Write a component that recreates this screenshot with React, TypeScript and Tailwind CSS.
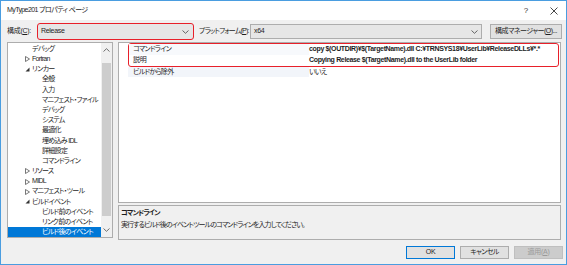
import React from 'react';

const font = { fontFamily: '"Liberation Sans", "Noto Sans CJK JP", sans-serif', fontFeatureSettings: '"palt"' };

type Node = { label: string; level: number; arrow?: 'closed' | 'open'; selected?: boolean };

const tree: Node[] = [
  { label: 'デバッグ', level: 1 },
  { label: 'Fortran', level: 1, arrow: 'closed' },
  { label: 'リンカー', level: 1, arrow: 'open' },
  { label: '全般', level: 2 },
  { label: '入力', level: 2 },
  { label: 'マニフェスト・ファイル', level: 2 },
  { label: 'デバッグ', level: 2 },
  { label: 'システム', level: 2 },
  { label: '最適化', level: 2 },
  { label: '埋め込み IDL', level: 2 },
  { label: '詳細設定', level: 2 },
  { label: 'コマンドライン', level: 2 },
  { label: 'リソース', level: 1, arrow: 'closed' },
  { label: 'MIDL', level: 1, arrow: 'closed' },
  { label: 'マニフェスト・ツール', level: 1, arrow: 'closed' },
  { label: 'ビルドイベント', level: 1, arrow: 'open' },
  { label: 'ビルド前のイベント', level: 2 },
  { label: 'リンク前のイベント', level: 2 },
  { label: 'ビルド後のイベント', level: 2, selected: true },
];

function Arrow({ kind }: { kind: 'closed' | 'open' }) {
  if (kind === 'closed') {
    return (
      <svg width="5" height="6" viewBox="0 0 5 6" className="shrink-0">
        <path d="M0.5 0.5 L4.5 3 L0.5 5.5 Z" fill="none" stroke="#555" strokeWidth="0.8" />
      </svg>
    );
  }
  return (
    <svg width="5" height="5" viewBox="0 0 5 5" className="shrink-0">
      <path d="M4.5 0.5 L4.5 4.5 L0.5 4.5 Z" fill="#333" />
    </svg>
  );
}

function Chevron() {
  return (
    <svg width="7" height="4" viewBox="0 0 7 4">
      <path d="M0.5 0.5 L3.5 3.3 L6.5 0.5" fill="none" stroke="#555" strokeWidth="0.9" />
    </svg>
  );
}

export default function App() {
  return (
    <div style={font} className="w-[567px] h-[265px] border border-[#4a9de0] bg-[#f0f0f0] flex flex-col text-[7px] text-[#1e1e1e] tracking-[-0.3px] overflow-hidden whitespace-nowrap">
      {/* title bar */}
      <div className="h-[19px] bg-white flex items-center pl-[6px] pr-[8px] shrink-0">
        <span className="tracking-[-0.6px]">MyType201 プロパティ ページ</span>
        <span className="ml-auto mr-[22px] text-[8px] text-[#333]">?</span>
        <svg width="8" height="8" viewBox="0 0 8 8">
          <path d="M0.5 0.5 L7.5 7.5 M7.5 0.5 L0.5 7.5" stroke="#333" strokeWidth="0.9" />
        </svg>
      </div>

      {/* config row */}
      <div className="flex items-center h-[17px] mt-[3px] pl-[6px] shrink-0">
        <span className="w-[30px] shrink-0">構成(<span className="underline">C</span>):</span>
        <div className="w-[157px] h-[17px] border border-[#e8202a] rounded-[3px] flex items-center pl-[3px] pr-[4px] bg-[#e6e6e6] shrink-0">
          <span>Release</span>
          <span className="ml-auto"><Chevron /></span>
        </div>
        <span className="ml-[5px] w-[51px] shrink-0 tracking-[-0.8px]">プラットフォーム(<span className="underline">P</span>):</span>
        <div className="w-[232px] h-[15px] border border-[#adadad] flex items-center pl-[3px] pr-[3px] bg-[#e6e6e6] shrink-0">
          <span>x64</span>
          <span className="ml-auto"><Chevron /></span>
        </div>
        <div className="ml-[8px] w-[72px] h-[15px] border border-[#adadad] bg-[#e1e1e1] flex items-center justify-center shrink-0 tracking-[-0.5px]">
          構成マネージャー(<span className="underline">O</span>)...
        </div>
      </div>

      {/* main */}
      <div className="flex mt-[2px] pl-[6px] shrink-0">
        {/* tree */}
        <div className="w-[106px] h-[196px] border border-[#adadad] bg-white flex overflow-hidden">
          <div className="flex-1 pt-[1px] flex flex-col overflow-hidden tracking-[-0.7px]">
            {tree.map((n, i) => (
              <div
                key={i}
                className={`h-[10.2px] flex items-center shrink-0 ${n.selected ? 'bg-[#0078d7] text-white' : ''}`}
              >
                {n.level === 1 ? (
                  <>
                    <span className="w-[23px] pl-[17px] flex shrink-0">{n.arrow ? <Arrow kind={n.arrow} /> : null}</span>
                    <span className="ml-[1px]">{n.label}</span>
                  </>
                ) : (
                  <span className="ml-[34px]">{n.label}</span>
                )}
              </div>
            ))}
          </div>
          <div className="w-[11px] bg-[#f0f0f0] flex flex-col items-center shrink-0">
            <svg width="7" height="4" viewBox="0 0 7 4" className="mt-[5px]">
              <path d="M0.5 3.5 L3.5 0.7 L6.5 3.5" fill="none" stroke="#606060" strokeWidth="0.9" />
            </svg>
            <div className="w-[9px] h-[153px] bg-[#cdcdcd] mt-[11px]" />
            <svg width="7" height="4" viewBox="0 0 7 4" className="mt-auto mb-[5px]">
              <path d="M0.5 0.5 L3.5 3.3 L6.5 0.5" fill="none" stroke="#606060" strokeWidth="0.9" />
            </svg>
          </div>
        </div>

        {/* right */}
        <div className="ml-[5px] w-[443px] flex flex-col">
          <div className="h-[161px] border border-[#adadad] bg-white pl-[9px]">
            <div className="border border-[#e8202a] rounded-[3px] w-[431px]">
              <div className="h-[11px] flex items-center">
                <span className="w-[180px] shrink-0 pl-[4px] bg-[#f7f9fc] h-full flex items-center tracking-[-0.7px]">コマンドライン</span>
                <span className="font-bold tracking-[-0.35px]">copy $(OUTDIR)¥$(TargetName).dll C:¥TRNSYS18¥UserLib¥ReleaseDLLs¥*.*</span>
              </div>
              <div className="h-[11px] flex items-center">
                <span className="w-[180px] shrink-0 pl-[4px] h-full flex items-center">説明</span>
                <span className="font-bold tracking-[-0.35px]">Copying Release $(TargetName).dll to the UserLib folder</span>
              </div>
            </div>
            <div className="h-[10px] flex items-center w-[431px]">
              <span className="w-[181px] shrink-0 pl-[5px] bg-[#f2f5fa] h-full flex items-center tracking-[-0.7px]">ビルドから除外</span>
              <span className="tracking-[-0.7px]">いいえ</span>
            </div>
          </div>
          <div className="mt-[2px] h-[35px] border border-[#adadad] bg-[#f0f0f0] pl-[2px] pt-[2px] flex flex-col gap-[2px] tracking-[-0.9px]">
            <span className="font-bold leading-[10px]">コマンドライン</span>
            <span className="leading-[10px]">実行するビルド後のイベントツールのコマンドラインを入力してください。</span>
          </div>
        </div>
      </div>

      {/* buttons */}
      <div className="flex justify-end gap-[5px] pr-[3px] mt-[6px] shrink-0">
        <div className="w-[49px] h-[13px] border border-[#0078d7] bg-[#e1e1e1] flex items-center justify-center">OK</div>
        <div className="w-[49px] h-[13px] border border-[#adadad] bg-[#e1e1e1] flex items-center justify-center tracking-[-0.6px]">キャンセル</div>
        <div className="w-[49px] h-[13px] border border-[#bfbfbf] bg-[#cccccc] text-[#9a9a9a] flex items-center justify-center">
          適用(<span className="underline">A</span>)
        </div>
      </div>
    </div>
  );
}
